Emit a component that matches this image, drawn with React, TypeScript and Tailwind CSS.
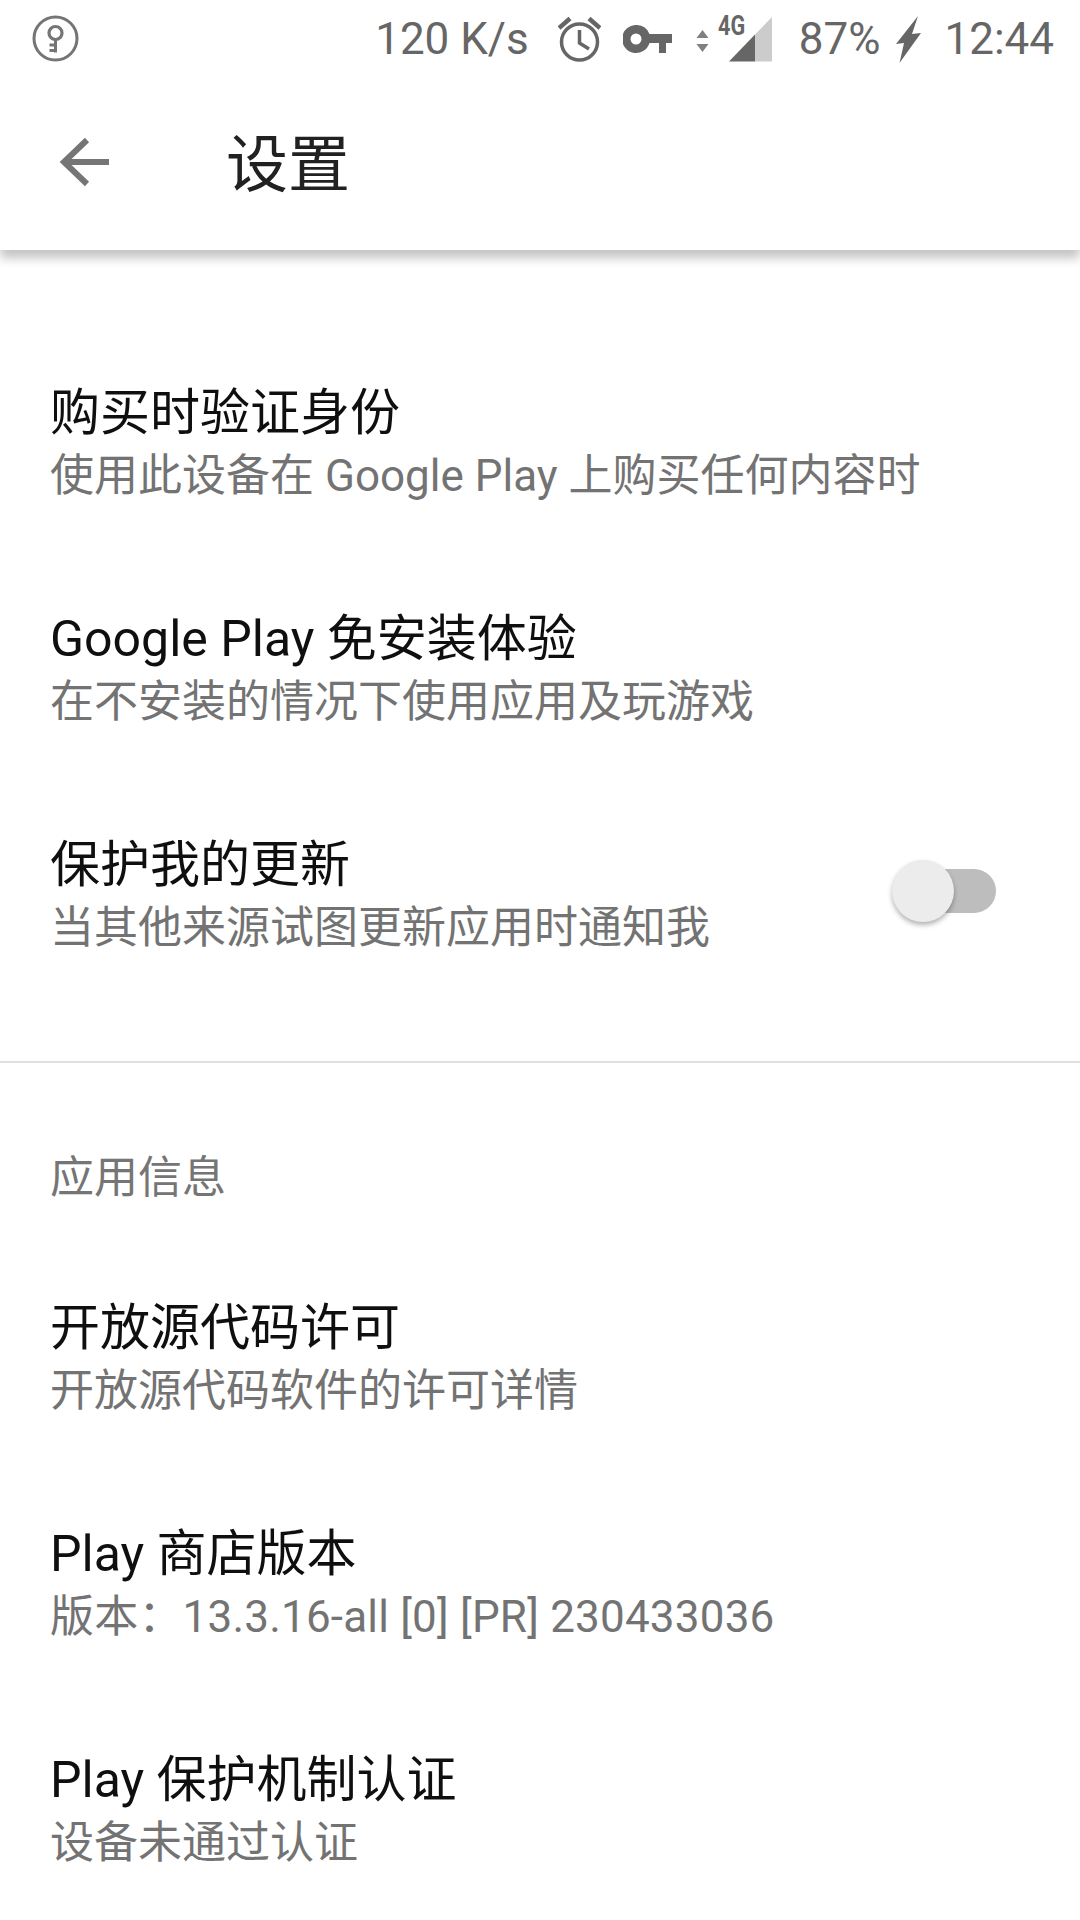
import type { ReactNode } from "react";

const FONT = "font-['Roboto','Noto_Sans_CJK_SC',sans-serif]";

function KeyCircle() {
  return (
    <svg width="47" height="47" viewBox="0 0 47 47" fill="none" stroke="#757575">
      <circle cx="23.5" cy="23.5" r="21.5" strokeWidth="3" />
      <circle cx="23.5" cy="18" r="6.5" strokeWidth="3.2" />
      <path d="M23.5 24.5V37.5M23.5 30h-6M23.5 35.5h-6" strokeWidth="3" />
    </svg>
  );
}

function Alarm() {
  return (
    <svg width="43" height="46" viewBox="0 0 43 46" fill="none" stroke="#666666" strokeWidth="3.5">
      <circle cx="21.5" cy="26" r="18" />
      <path d="M21.5 14V27L31 33" />
      <path d="M1 12L12 2.5M42 12L31 2.5" strokeWidth="4.5" />
    </svg>
  );
}

function KeyIcon() {
  return (
    <svg width="49" height="28" viewBox="0 0 49 28" fill="#666666">
      <path d="M14 0a14 14 0 0 1 12.5 9H49v9h-6v10H36V18h-9.5A14 14 0 1 1 14 0z" />
      <circle cx="13" cy="14" r="5.5" fill="#ffffff" />
    </svg>
  );
}

function Signal() {
  return (
    <svg width="76" height="45" viewBox="0 0 76 45" fill="none">
      <path d="M0.5 21L6.5 13 12.5 21zM0.5 27L6.5 35 12.5 27z" fill="#808080" />
      <path d="M59 17.6L76 0V44.5H59z" fill="#cccccc" />
      <path d="M33 44.5L59 17.6V44.5z" fill="#666666" />
    </svg>
  );
}

function Bolt() {
  return (
    <svg width="25" height="47" viewBox="0 0 25 47" fill="#666666">
      <path d="M22 0L0 28 8 27 3.5 47 25 17 16 18z" />
    </svg>
  );
}

function BackArrow() {
  return (
    <svg width="50" height="50" viewBox="0 0 50 50" fill="none" stroke="#757575" strokeWidth="6">
      <path d="M50 25H6M28 3L5 25 28 47" />
    </svg>
  );
}

function Row({ title, sub, toggle }: { title: string; sub: ReactNode; toggle?: boolean }) {
  return (
    <div className="flex h-[226px] items-center justify-between pl-[50px] pr-[84px]">
      <div className="flex flex-col">
        <div className="h-[64px] text-[50px] leading-[64px] text-[#0f0f0f]">{title}</div>
        <div className="h-[62px] text-[44px] leading-[62px] text-[#737373]">{sub}</div>
      </div>
      {toggle && (
        <div className="relative mb-[10px] h-[44px] w-[84px] rounded-full bg-[#bdbdbd]">
          <div className="absolute left-[-20px] top-[-9px] h-[62px] w-[62px] rounded-full bg-[#ececec] shadow-[0_3px_5px_rgba(0,0,0,0.3)]" />
        </div>
      )}
    </div>
  );
}

export default function App() {
  return (
    <div className={`${FONT} h-[1920px] w-[1080px] overflow-hidden bg-white`}>
      <header className="h-[250px] bg-white shadow-[0_8px_10px_rgba(0,0,0,0.24)]">
        <div className="flex h-[77px] items-center justify-between pl-[32px] pr-[26px] text-[44px] text-[#666666]">
          <KeyCircle />
          <div className="flex items-center pt-[1px]">
            <span>120 K/s</span>
            <span className="ml-[29px] flex"><Alarm /></span>
            <span className="ml-[22px] flex"><KeyIcon /></span>
            <span className="relative ml-[24px] flex">
              <Signal />
              <span className="absolute left-[22px] top-[-4px] origin-left scale-x-[0.8] text-[27px] font-bold leading-[27px]">4G</span>
            </span>
            <span className="ml-[27px]">87%</span>
            <span className="ml-[16px] flex"><Bolt /></span>
            <span className="ml-[23px]">12:44</span>
          </div>
        </div>
        <div className="flex h-[173px] items-center pl-[59px]">
          <span className="mb-[3px] flex"><BackArrow /></span>
          <span className="ml-[117px] mt-[4px] text-[62px] text-[#212121]">设置</span>
        </div>
      </header>
      <main className="pt-[81px]">
        <Row title="购买时验证身份" sub="使用此设备在 Google Play 上购买任何内容时" />
        <Row title="Google Play 免安装体验" sub="在不安装的情况下使用应用及玩游戏" />
        <Row title="保护我的更新" sub="当其他来源试图更新应用时通知我" toggle />
        <div className="mt-[52px] h-[2px] bg-[#e0e0e0]" />
        <div className="flex h-[183px] items-center pl-[50px] pt-[46px] text-[44px] text-[#757575]">应用信息</div>
        <Row title="开放源代码许可" sub="开放源代码软件的许可详情" />
        <Row title="Play 商店版本" sub={<span className="tracking-[0.2px]">版本：13.3.16-all [0] [PR] 230433036</span>} />
        <Row title="Play 保护机制认证" sub="设备未通过认证" />
      </main>
    </div>
  );
}
